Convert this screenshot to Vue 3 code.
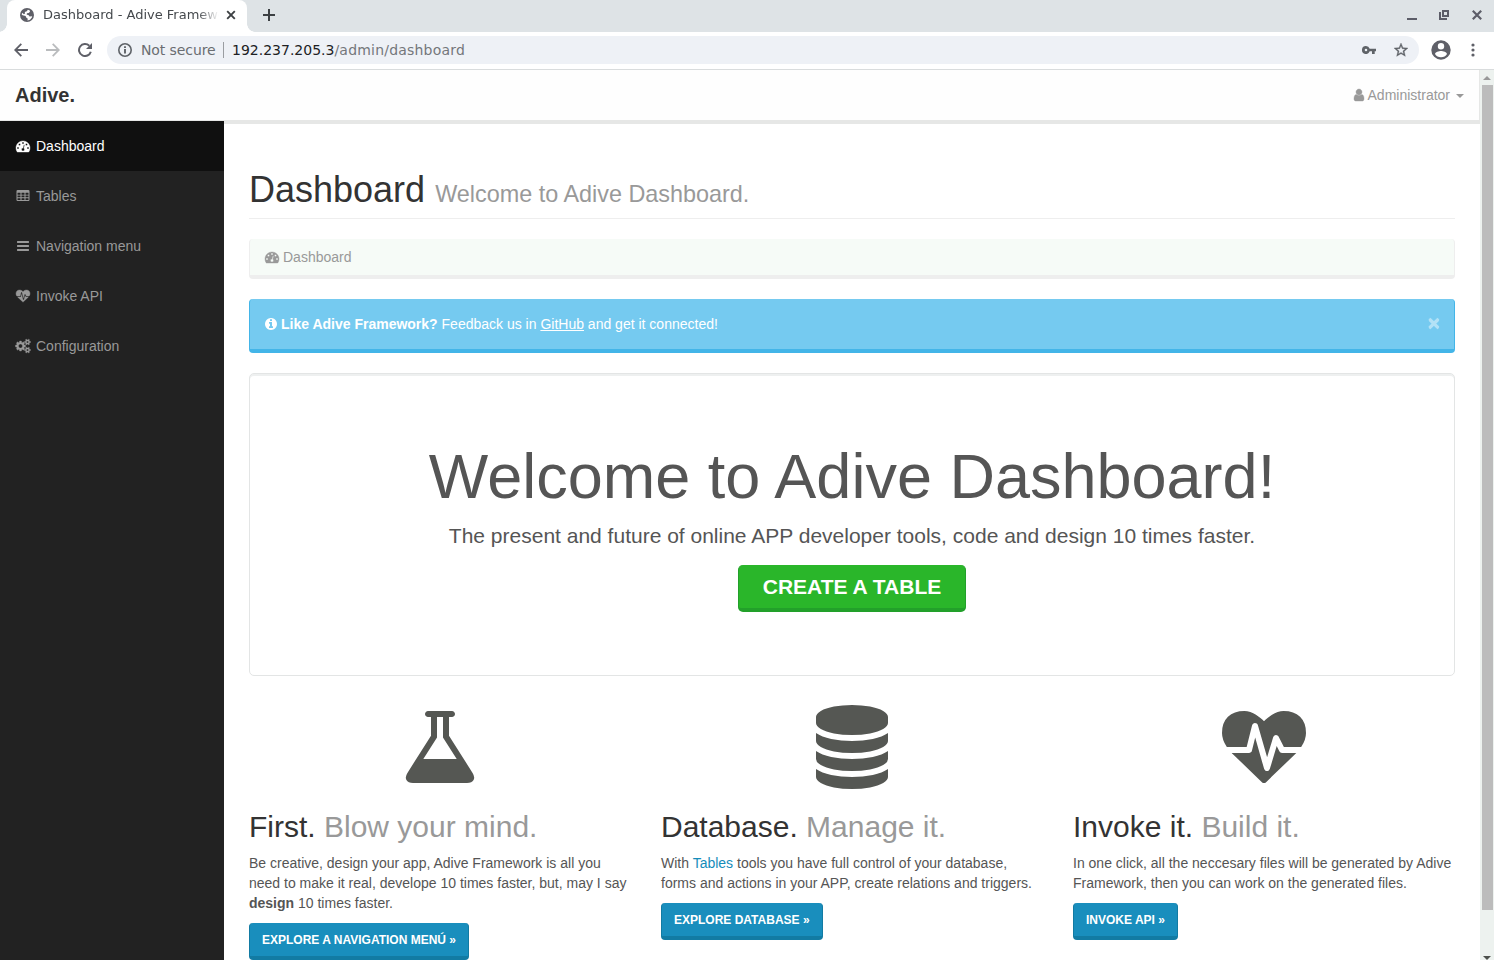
<script setup>
const paths = {
  tachometer: 'M384 1152q0-53-37.5-90.5t-90.5-37.5-90.5 37.5-37.5 90.5 37.5 90.5 90.5 37.5 90.5-37.5 37.5-90.5zm192-448q0-53-37.5-90.5t-90.5-37.5-90.5 37.5-37.5 90.5 37.5 90.5 90.5 37.5 90.5-37.5 37.5-90.5zm428 481l101-382q6-26-7.5-48.5t-38.5-29.5-48 6.5-30 39.5l-101 382q-60 5-107 43.5t-63 98.5q-20 77 20 146t117 89 146-20 89-117q16-60-6-117t-72-91zm660-33q0-53-37.5-90.5t-90.5-37.5-90.5 37.5-37.5 90.5 37.5 90.5 90.5 37.5 90.5-37.5 37.5-90.5zm-640-640q0-53-37.5-90.5t-90.5-37.5-90.5 37.5-37.5 90.5 37.5 90.5 90.5 37.5 90.5-37.5 37.5-90.5zm448 192q0-53-37.5-90.5t-90.5-37.5-90.5 37.5-37.5 90.5 37.5 90.5 90.5 37.5 90.5-37.5 37.5-90.5zm320 448q0 261-141 483-19 29-54 29h-1402q-35 0-54-29-141-221-141-483 0-182 71-348t191-286 286-191 348-71 348 71 286 191 191 286 71 348z',
  table: 'M224 128h1344q66 0 113 47t47 113v1088q0 66-47 113t-113 47h-1344q-66 0-113-47t-47-113v-1088q0-66 47-113t113-47zM192 512v192q0 32 32 32h320q32 0 32-32v-192q0-32-32-32h-320q-32 0-32 32zm512 0v192q0 32 32 32h320q32 0 32-32v-192q0-32-32-32h-320q-32 0-32 32zm512 0v192q0 32 32 32h320q32 0 32-32v-192q0-32-32-32h-320q-32 0-32 32zM192 864v160q0 32 32 32h320q32 0 32-32v-160q0-32-32-32h-320q-32 0-32 32zm512 0v160q0 32 32 32h320q32 0 32-32v-160q0-32-32-32h-320q-32 0-32 32zm512 0v160q0 32 32 32h320q32 0 32-32v-160q0-32-32-32h-320q-32 0-32 32zM192 1216v160q0 32 32 32h320q32 0 32-32v-160q0-32-32-32h-320q-32 0-32 32zm512 0v160q0 32 32 32h320q32 0 32-32v-160q0-32-32-32h-320q-32 0-32 32zm512 0v160q0 32 32 32h320q32 0 32-32v-160q0-32-32-32h-320q-32 0-32 32z',
  bars: 'M1664 1344v128q0 26-19 45t-45 19h-1408q-26 0-45-19t-19-45v-128q0-26 19-45t45-19h1408q26 0 45 19t19 45zm0-512v128q0 26-19 45t-45 19h-1408q-26 0-45-19t-19-45v-128q0-26 19-45t45-19h1408q26 0 45 19t19 45zm0-512v128q0 26-19 45t-45 19h-1408q-26 0-45-19t-19-45v-128q0-26 19-45t45-19h1408q26 0 45 19t19 45z',
  heartbeat: 'M1280 1024h305q-5 6-10 10.5t-9 7.5l-3 4-623 600q-18 18-44 18t-44-18l-624-602q-5-2-21-20h369q22 0 39.5-13.5t22.5-34.5l70-281 190 667q6 20 23 33t39 13q21 0 38-13t23-33l146-485 56 112q18 35 57 35zm512-428q0 145-103 300h-369l-111-221q-8-17-25.5-27t-36.5-8q-45 5-56 46l-129 430-196-686q-6-20-23.5-33t-39.5-13-39 13.5-22 34.5l-116 464h-423q-103-155-103-300 0-220 127-344t351-124q62 0 126.5 21.5t120 58 95.5 68.5 76 68q36-36 76-68t95.5-68.5 120-58 126.5-21.5q224 0 351 124t127 344z',
  cogs: 'M896 896q0-106-75-181t-181-75-181 75-75 181 75 181 181 75 181-75 75-181zm768 512q0-52-38-90t-90-38-90 38-38 90q0 53 37.5 90.5t90.5 37.5 90.5-37.5 37.5-90.5zm0-1024q0-52-38-90t-90-38-90 38-38 90q0 53 37.5 90.5t90.5 37.5 90.5-37.5 37.5-90.5zm-384 421v185q0 10-7 19.5t-16 10.5l-155 24q-11 35-32 76 34 48 90 115 7 11 7 20 0 12-7 19-23 30-82.5 89.5t-78.5 59.5q-11 0-21-7l-115-90q-37 19-77 31-11 108-23 155-7 24-30 24h-186q-11 0-20-7.5t-10-17.5l-23-153q-34-10-75-31l-118 89q-7 7-20 7-11 0-21-8-144-133-144-160 0-9 7-19 10-14 41-53t47-61q-23-44-35-82l-152-24q-10-1-17-9.5t-7-19.5v-185q0-10 7-19.5t16-10.5l155-24q11-35 32-76-34-48-90-115-7-11-7-20 0-12 7-20 22-30 82-89t79-59q11 0 21 7l115 90q34-18 77-32 11-108 23-154 7-24 30-24h186q11 0 20 7.5t10 17.5l23 153q34 10 75 31l118-89q8-7 20-7 11 0 21 8 144 133 144 160 0 8-7 19-12 16-42 54t-45 60q23 48 34 82l152 23q10 2 17 10.5t7 19.5zm640 533v140q0 16-149 31-12 27-30 52 51 113 51 138 0 4-4 7-122 71-124 71-8 0-46-47t-52-68q-20 2-30 2t-30-2q-14 21-52 68t-46 47q-2 0-124-71-4-3-4-7 0-25 51-138-18-25-30-52-149-15-149-31v-140q0-16 149-31 13-29 30-52-51-113-51-138 0-4 4-7 4-2 35-20t59-34 30-16q8 0 46 46.5t52 67.5q20-2 30-2t30 2q51-71 92-112l6-2q4 0 124 70 4 3 4 7 0 25-51 138 17 23 30 52 149 15 149 31zm0-1024v140q0 16-149 31-12 27-30 52 51 113 51 138 0 4-4 7-122 71-124 71-8 0-46-47t-52-68q-20 2-30 2t-30-2q-14 21-52 68t-46 47q-2 0-124-71-4-3-4-7 0-25 51-138-18-25-30-52-149-15-149-31v-140q0-16 149-31 13-29 30-52-51-113-51-138 0-4 4-7 4-2 35-20t59-34 30-16q8 0 46 46.5t52 67.5q20-2 30-2t30 2q51-71 92-112l6-2q4 0 124 70 4 3 4 7 0 25-51 138 17 23 30 52 149 15 149 31z',
  database: 'M896 768q237 0 443-43t325-127v170q0 69-103 128t-280 93.5-385 34.5-385-34.5-280-93.5-103-128v-170q119 84 325 127t443 43zm0 768q237 0 443-43t325-127v170q0 69-103 128t-280 93.5-385 34.5-385-34.5-280-93.5-103-128v-170q119 84 325 127t443 43zm0-384q237 0 443-43t325-127v170q0 69-103 128t-280 93.5-385 34.5-385-34.5-280-93.5-103-128v-170q119 84 325 127t443 43zm0-1152q208 0 385 34.5t280 93.5 103 128v128q0 69-103 128t-280 93.5-385 34.5-385-34.5-280-93.5-103-128v-128q0-69 103-128t280-93.5 385-34.5z',
  flask: 'M1591 1448q56 89 21.5 152.5t-140.5 63.5h-1152q-106 0-140.5-63.5t21.5-152.5l503-793v-399h-64q-26 0-45-19t-19-45 19-45 45-19h512q26 0 45 19t19 45-19 45-45 19h-64v399zm-779-725l-272 429h712l-272-429-20-31v-436h-128v436z',
  user: 'M1536 1399q0 109-62.5 187t-150.5 78h-854q-88 0-150.5-78t-62.5-187q0-85 8.5-160.5t31.5-152 58.5-131 94-89 134.5-34.5q131 128 313 128t313-128q76 0 134.5 34.5t94 89 58.5 131 31.5 152 8.5 160.5zm-256-887q0 159-112.5 271.5t-271.5 112.5-271.5-112.5-112.5-271.5 112.5-271.5 271.5-112.5 271.5 112.5 112.5 271.5z',
  info: 'M1152 1376v-160q0-14-9-23t-23-9h-96v-512q0-14-9-23t-23-9h-320q-14 0-23 9t-9 23v160q0 14 9 23t23 9h96v320h-96q-14 0-23 9t-9 23v160q0 14 9 23t23 9h448q14 0 23-9t9-23zm-128-896v-160q0-14-9-23t-23-9h-192q-14 0-23 9t-9 23v160q0 14 9 23t23 9h192q14 0 23-9t9-23zm640 416q0 209-103 385.5t-279.5 279.5-385.5 103-385.5-103-279.5-279.5-103-385.5 103-385.5 279.5-279.5 385.5-103 385.5 103 279.5 279.5 103 385.5z',
}

const menu = [
  { icon: 'tachometer', label: 'Dashboard', active: true },
  { icon: 'table', label: 'Tables' },
  { icon: 'bars', label: 'Navigation menu' },
  { icon: 'heartbeat', label: 'Invoke API' },
  { icon: 'cogs', label: 'Configuration' },
]
</script>

<template>
  <div class="window">
    <div class="tabstrip">
      <div class="tab">
        <svg class="globe" width="14" height="14" viewBox="0 0 14 14">
          <circle cx="7" cy="7" r="7" fill="#5f6068" />
          <path d="M7.8 1.7 9.6 2.3 10 3.7 8.7 5 7 5.2 6.6 6.6 8.7 7.2 9.6 8.4 12.1 8.2 12.4 7 11.9 9.5 10 11.8 7.4 12.4 7.8 10.8 6.2 9.4 5.6 8 2.6 7.3 1.7 6.6 2.1 4.8 3.9 6.2 5 5.6 4.8 4.1 6.8 3.3z" fill="#fff" />
        </svg>
        <span class="tab-title">Dashboard - Adive Framework</span>
        <svg class="tab-close" width="10" height="10" viewBox="0 0 10 10"><path d="M1.2 1.2 8.8 8.8M8.8 1.2 1.2 8.8" stroke="#3c4043" stroke-width="1.9" /></svg>
      </div>
      <svg class="tab-new" width="12" height="12" viewBox="0 0 12 12"><path d="M6 0v12M0 6h12" stroke="#3c4043" stroke-width="2" /></svg>
      <div class="win-buttons">
        <svg width="10" height="12" viewBox="0 0 10 12"><path d="M0 10h10" stroke="#5c5d68" stroke-width="2" /></svg>
        <svg width="10" height="12" viewBox="0 0 10 12"><path d="M4 2h5v5H4zM1 3v7h7" fill="none" stroke="#5c5d68" stroke-width="2" /></svg>
        <svg width="10" height="12" viewBox="0 0 10 12"><path d="M.8 1.8l8.4 8.4M9.2 1.8.8 10.2" stroke="#5c5d68" stroke-width="2.2" /></svg>
      </div>
    </div>

    <div class="toolbar">
      <svg class="nav-btn" width="14" height="14" viewBox="0 0 14 14"><path d="M14 7H1.5M7.3.8 1.2 7l6.1 6.2" fill="none" stroke="#5f6068" stroke-width="1.8" /></svg>
      <svg class="nav-btn" width="14" height="14" viewBox="0 0 14 14"><path d="M0 7h12.500M6.700.8 12.800 7l-6.100 6.200" fill="none" stroke="#babcbe" stroke-width="1.8" /></svg>
      <svg class="nav-btn" width="14" height="14" viewBox="0 0 14 14"><path d="M12.800 8.700A6 6 0 1 1 11.300 2.800" fill="none" stroke="#5f6068" stroke-width="2" /><path d="M14 0v6H8z" fill="#5f6068" /></svg>
      <div class="omnibox">
        <svg width="14" height="14" viewBox="0 0 14 14"><circle cx="7" cy="7" r="6.2" fill="none" stroke="#5f6368" stroke-width="1.6" /><path d="M7 6v4.500M7 3.200v1.800" stroke="#5f6368" stroke-width="1.900" /></svg>
        <span class="insecure">Not secure</span>
        <span class="divider"></span>
        <span class="url">192.237.205.3<span class="url-path">/admin/dashboard</span></span>
        <svg class="key" width="14" height="8" viewBox="0 0 14 8"><path fill="#5f6368" fill-rule="evenodd" d="M4 0a4 4 0 1 0 3.700 5.300H10V8h2.700V5.300H14V2.700H7.700A4 4 0 0 0 4 0zm0 2.700a1.300 1.300 0 1 1 0 2.600 1.300 1.300 0 0 1 0-2.600z" /></svg>
        <svg width="14" height="14" viewBox="2 2 20 20"><path fill="#5f6368" stroke="#5f6368" stroke-width=".5" d="M22 9.240l-7.190-.62L12 2 9.190 8.630 2 9.240l5.460 4.730L5.820 21 12 17.270 18.180 21l-1.630-7.030L22 9.240zM12 15.400l-3.760 2.270 1-4.280-3.320-2.880 4.380-.38L12 6.100l1.710 4.040 4.380.38-3.320 2.880 1 4.280L12 15.400z" /></svg>
      </div>
      <svg class="avatar" width="20" height="20" viewBox="2 2 20 20"><path fill="#5f6068" d="M12 2.300a9.700 9.700 0 1 0 0 19.400 9.700 9.700 0 0 0 0-19.400zM12 5a3.200 3.200 0 1 1 0 6.400A3.200 3.200 0 0 1 12 5zm0 14.200a7 7 0 0 1-6-3.200c0-2 4-3.100 6-3.100s6 1.100 6 3.100a7 7 0 0 1-6 3.200z" /></svg>
      <svg class="dots" width="4" height="14" viewBox="0 0 4 14"><g fill="#5f6068"><circle cx="2" cy="2" r="1.600" /><circle cx="2" cy="7" r="1.600" /><circle cx="2" cy="12" r="1.600" /></g></svg>
    </div>

    <div class="viewport">
      <div class="page">
        <nav class="navbar">
          <a class="brand">Adive.</a>
          <div class="account">
            <svg class="user-icon glyph" width="12" height="14" viewBox="128 0 1536 1792"><path :d="paths.user" fill="currentColor" /></svg>
            <span>Administrator</span>
            <i class="caret"></i>
          </div>
        </nav>
        <div class="columns">
          <aside class="sidebar">
            <a v-for="m in menu" :key="m.label" class="item" :class="{ active: m.active }">
              <svg class="item-icon" :class="{ glyph: m.icon !== 'bars' && m.icon !== 'table' }" width="16" height="14" :viewBox="m.icon === 'cogs' ? '-64 0 2048 1792' : '-128 0 2048 1792'"><path :d="paths[m.icon]" fill="currentColor" fill-rule="evenodd" /></svg>
              <span>{{ m.label }}</span>
            </a>
          </aside>
          <main class="content">
            <h1 class="page-header">Dashboard <small>Welcome to Adive Dashboard.</small></h1>
            <div class="breadcrumb">
              <svg class="glyph" width="14" height="14" viewBox="0 0 1792 1792"><path :d="paths.tachometer" fill="currentColor" fill-rule="evenodd" /></svg>
              <span>Dashboard</span>
            </div>
            <div class="alert">
              <svg width="12" height="14" viewBox="128 0 1536 1792"><path :d="paths.info" fill="currentColor" fill-rule="evenodd" /></svg>
              <p><strong>Like Adive Framework?</strong> Feedback us in <u>GitHub</u> and get it connected!</p>
              <b class="dismiss">×</b>
            </div>
            <section class="jumbotron">
              <h1>Welcome to Adive Dashboard!</h1>
              <p>The present and future of online APP developer tools, code and design 10 times faster.</p>
              <a class="btn btn-success">Create a table</a>
            </section>
            <div class="features">
              <section>
                <svg class="big" viewBox="0 0 1792 1792"><path :d="paths.flask" fill-rule="evenodd" /></svg>
                <h2>First. <small>Blow your mind.</small></h2>
                <p>Be creative, design your app, Adive Framework is all you need to make it real, develope 10 times faster, but, may I say <strong>design</strong> 10 times faster.</p>
                <a class="btn">Explore a navigation menú »</a>
              </section>
              <section>
                <svg class="big" viewBox="0 0 1792 1792"><path :d="paths.database" /></svg>
                <h2>Database. <small>Manage it.</small></h2>
                <p>With <a class="link">Tables</a> tools you have full control of your database, forms and actions in your APP, create relations and triggers.</p>
                <a class="btn">Explore database »</a>
              </section>
              <section>
                <svg class="big" viewBox="0 0 1792 1792"><path :d="paths.heartbeat" /></svg>
                <h2>Invoke it. <small>Build it.</small></h2>
                <p>In one click, all the neccesary files will be generated by Adive Framework, then you can work on the generated files.</p>
                <a class="btn">Invoke API »</a>
              </section>
            </div>
          </main>
        </div>
      </div>
      <div class="scrollbar">
        <i class="arrow-up"></i>
        <div class="thumb"></div>
        <i class="arrow-down"></i>
      </div>
    </div>
  </div>
</template>

<style>
body { overflow: hidden; }
</style>

<style scoped>
* { box-sizing: border-box; }
svg { display: block; flex: none; }
.glyph { stroke: currentColor; stroke-width: 50; overflow: visible; }
.window { width: 1494px; height: 960px; display: flex; flex-direction: column; overflow: hidden; background: #fff; }

.tabstrip { height: 32px; flex: none; display: flex; align-items: center; background: #dee3e6; padding-left: 7px; font: 13px/16px "DejaVu Sans", sans-serif; }
.tab { position: relative; width: 240px; height: 32px; background: #fff; border-radius: 8px 8px 0 0; display: flex; align-items: center; padding: 0 11px 2px 13px; }
.tab::before, .tab::after { content: ""; position: absolute; bottom: 0; width: 8px; height: 8px; }
.tab::before { left: -8px; background: radial-gradient(circle at 0 0, transparent 7.5px, #fff 8px); }
.tab::after { right: -8px; background: radial-gradient(circle at 100% 0, transparent 7.5px, #fff 8px); }
.tab-title { margin-left: 9px; width: 176px; overflow: hidden; white-space: nowrap; color: #45494d; -webkit-mask-image: linear-gradient(90deg, #000 155px, transparent 176px); mask-image: linear-gradient(90deg, #000 155px, transparent 176px); }
.tab-close { margin-left: 7px; }
.tab-new { margin: -2px 0 0 16px; }
.win-buttons { margin: -2px 12px 0 auto; display: flex; gap: 22px; }
.win-buttons svg:nth-child(-n+2) { margin-left: -1px; margin-right: 1px; }

.toolbar { height: 38px; flex: none; display: flex; align-items: center; padding: 0 0 2px 14px; border-bottom: 1px solid #d9dcdd; font: 14px/20px "DejaVu Sans", sans-serif; }
.nav-btn { margin-right: 18px; }
.nav-btn:nth-child(3) { margin-right: 15px; }
.omnibox { width: 1312px; height: 28px; border-radius: 14px; background: #eef1f6; display: flex; align-items: center; padding: 0 11px; }
.insecure { margin-left: 9px; width: 73.5px; letter-spacing: -.1px; white-space: nowrap; color: #6a6d71; }
.divider { width: 1px; height: 16px; background: #9a9da1; margin: 0 8px 0 8.5px; }
.url { color: #202124; }
.url-path { color: #74777b; letter-spacing: .2px; }
.key { margin: 0 18px 0 auto; }
.avatar { margin-left: 12px; }
.dots { margin-left: 20px; }

.viewport { flex: 1; min-height: 0; display: flex; font: 14px/20px "Liberation Sans", Arial, sans-serif; color: #555; }
.page { width: 1480px; display: flex; flex-direction: column; }
.navbar { height: 54px; flex: none; background: #fefefe; border: solid #e6e7e6; border-width: 0 1px 4px 0; display: flex; justify-content: space-between; align-items: center; padding: 0 15px; }
.brand { font-size: 20px; font-weight: bold; color: #333; }
.account { display: flex; align-items: center; color: #999; }
.account span { margin-left: 3px; }
.caret { margin: 1px 0 0 6px; border: 4px solid transparent; border-top-color: #999; border-bottom: 0; }
.columns { flex: 1; min-height: 0; display: flex; }
.sidebar { width: 224px; flex: none; margin-top: -3px; background: #222; position: relative; }
.item { display: flex; align-items: center; height: 50px; padding: 0 15px; color: #999; }
.item span { margin-left: 5px; }
.item.active { background: #101010; color: #fff; }

.content { flex: 1; padding: 45px 25px 0; background: #fff; }
h1, h2, p { margin: 0; font-weight: normal; }
small { font-size: 65%; color: #999; }
.page-header { height: 50px; padding-top: 1px; border-bottom: 1px solid #eee; font-size: 36px; line-height: 40px; color: #333; }
.breadcrumb { margin-top: 20px; height: 40px; border: solid #eee; border-width: 0 1px 4px; border-radius: 4px; background: #f6fbf7; padding: 0 15px; display: flex; align-items: center; gap: 4px; color: #999; }
.alert { margin-top: 20px; height: 54px; border: solid #43b5e8; border-width: 0 1px 4px; border-radius: 4px; background: #75caf0; padding: 0 14px 0 15px; display: flex; align-items: center; color: #fff; }
.alert p { margin-left: 4px; }
.dismiss { margin-left: auto; font-size: 21px; line-height: 20px; font-weight: bold; opacity: .45; text-shadow: 0 1px 0 #fff, 0 0 1px #fff; transform: translateY(-1px); }
.jumbotron { margin-top: 20px; height: 303px; border: 1px solid #e3e5e5; border-radius: 5px; box-shadow: inset 0 2px 0 #eef0f0; display: flex; flex-direction: column; align-items: center; padding-top: 68px; }
.jumbotron h1 { font-size: 63px; line-height: 69px; }
.jumbotron p { margin-top: 10px; font-size: 21px; line-height: 30px; }
.btn { display: inline-block; height: 37px; padding: 9px 12px 7px; border: solid #127ba3; border-width: 0 1px 4px; border-radius: 4px; background: #198ebd; color: #fff; font-size: 12px; line-height: 17px; font-weight: bold; text-transform: uppercase; white-space: nowrap; }
.btn-success { margin-top: 14px; height: 47px; padding: 7px 24px; border-color: #22a02a; border-radius: 5px; background: #2ab62a; font-size: 21px; line-height: 30px; }
.features { margin: 29px -15px 0; display: grid; grid-template-columns: repeat(3, 1fr); }
.features section { padding: 0 15px; }
.big { width: 84px; height: 84px; margin: 0 auto; fill: #555753; }
h2 { margin-top: 21px; font-size: 30px; line-height: 33px; color: #333; }
h2 small { font-size: 30px; }
.features p { margin: 10px 0; }
.link { color: #158cba; }

.scrollbar { width: 14px; background: #edf2ef; display: flex; flex-direction: column; align-items: center; }
.arrow-up { margin-top: 6px; border: 4px solid transparent; border-bottom-color: #999; border-top: 0; }
.thumb { margin: 5px 0 0 1px; width: 11px; height: 825px; background: #bcbcbc; }
.arrow-down { margin-top: 46px; border: 4px solid transparent; border-top-color: #4c504c; border-bottom: 0; }
</style>
